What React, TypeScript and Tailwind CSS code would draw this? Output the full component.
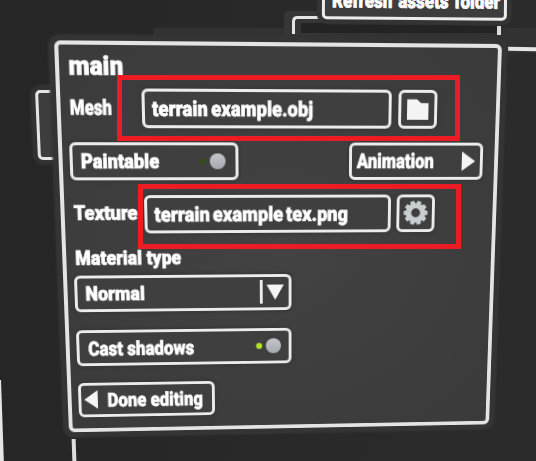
import type { ReactNode } from "react";

const boxClass =
  "box-border flex shrink-0 items-center rounded-[6px] border-[3px] border-[#ececec] bg-[#3f3f3f] shadow-[0_0_3px_2px_#393939]";

function Label({ children, className = "" }: { children: ReactNode; className?: string }) {
  return (
    <span
      className={`inline-block origin-left pt-[2px] text-[21px] leading-none font-black whitespace-nowrap text-white [-webkit-text-stroke:0.7px_white] ${className}`}
    >
      {children}
    </span>
  );
}

function Toggle({ on = false }: { on?: boolean }) {
  return (
    <div className="flex items-center gap-[4px]">
      <span
        className={`size-[6px] rounded-full ${
          on ? "bg-[#b9e42c] shadow-[0_0_2px_#87aa26]" : "bg-[#334d1d]"
        }`}
      />
      <span className="size-[16px] rounded-full bg-linear-to-b from-[#c3c6ca] to-[#a6aaae]" />
    </div>
  );
}

function FolderIcon() {
  return (
    <svg width="22" height="21" viewBox="0 0 22 21" fill="#f4f4f4">
      <path d="M0 .5h10.2l4 3.8H22V21H0z" />
    </svg>
  );
}

function GearIcon() {
  const teeth = Array.from({ length: 10 }, (_, i) => i * 36 + 18);
  return (
    <svg width="26" height="26" viewBox="-13 -13 26 26">
      <circle r="7.4" fill="none" stroke="#c9ced1" strokeWidth="5.4" />
      {teeth.map((deg) => (
        <path
          key={deg}
          d="M-2.7 -9L-2 -12.5H2L2.7 -9z"
          fill="#c9ced1"
          transform={`rotate(${deg})`}
        />
      ))}
    </svg>
  );
}

function Backdrop() {
  return (
    <>
      {/* strip of the window behind, right and above */}
      <div className="absolute top-[28px] left-[154px] h-[25px] w-[382px] bg-[#323232]" />
      <div className="absolute top-[47px] left-[508px] h-[3.5px] w-[28px] rotate-[0.6deg] bg-[#e6e6e6]" />

      {/* frame behind the refresh button */}
      <div className="absolute top-[11px] left-[284px] h-[24px] w-[40px] rounded-tl-[4px] bg-[#363636]" />
      <div className="absolute top-[23px] left-[301px] h-[10px] w-[196px] bg-[#232323]" />
      <div className="absolute top-[15.5px] left-[291.5px] h-[18px] w-[40px] rounded-tl-[5px] border-t-[3.5px] border-l-[3.5px] border-[#e4e4e4]" />
      <div className="absolute top-[26px] left-[497px] h-[9px] w-[3.5px] bg-[#dcdcdc]" />
      <div className="absolute -top-[20px] left-[322px] box-border flex h-[40px] w-[185px] rotate-[0.5deg] items-end rounded-[5px] border-[3px] border-[#ececec] bg-[#3d3d3d] pb-[5px] pl-[7px] shadow-[0_0_1px_5px_#343434]">
        <Label className="scale-x-[0.81] [word-spacing:2px]">Refresh assets folder</Label>
      </div>

      {/* left button, mostly hidden */}
      <div className="absolute top-[89.5px] left-[35px] box-border h-[70px] w-[30px] origin-top-left skew-x-[2.5deg] rounded-[5px] border-[3.5px] border-[#e6e6e6] bg-[#3d3d3d] shadow-[0_0_3px_5px_#333333]" />

      <div className="absolute top-[380px] -left-[3px] h-[81px] w-[3.5px] origin-top-left skew-x-[2deg] bg-[#e6e6e6]" />
      <div className="absolute top-[439px] left-[72px] h-[22px] w-[3.5px] skew-x-[2deg] bg-[#dedede]" />
    </>
  );
}

function MainPanel() {
  return (
    <div className="relative box-border flex h-[400px] w-[448px] origin-top-left flex-col rounded-[6px] border-[4px] border-[#e4e4e4] bg-radial from-[#434343] to-[#3a3a3a] px-[6.6px] shadow-[0_0_2px_6px_#343434] [transform:matrix3d(1.036069,0.0114203,0,0.00007185,0.0491718,1.053127,0,0.000169158,0,0,1,0,54,40.3,0,1)]">
      <div className="flex h-[42.2px] shrink-0 items-center pl-[2px]">
        <Label className="-mt-[4px] scale-x-[0.91] text-[26.5px]">main</Label>
      </div>

      <div className="flex h-[39px] shrink-0 items-center">
        <div className="w-[73.5px] shrink-0 pl-[2px]">
          <Label className="scale-x-[0.79]">Mesh</Label>
        </div>
        <div className={`${boxClass} h-[39px] w-[252px] pl-[7px]`}>
          <Label className="scale-x-[0.885] [word-spacing:-1.5px]">terrain example.obj</Label>
        </div>
        <div className={`${boxClass} ml-[7px] h-[39px] w-[40px] justify-center`}>
          <FolderIcon />
        </div>
      </div>

      <div className="mt-[13.5px] flex h-[38.4px] shrink-0">
        <div className={`${boxClass} w-[169px] justify-between pr-[10px] pl-[8.5px]`}>
          <Label className="scale-x-[0.87]">Paintable</Label>
          <Toggle />
        </div>
        <div className={`${boxClass} ml-[113px] w-[139.5px] justify-between pr-[5.5px] pl-[5.5px]`}>
          <Label className="scale-x-[0.82]">Animation</Label>
          <svg width="14" height="20" viewBox="0 0 14 20" fill="#f4f4f4">
            <path d="M0 0L14 10L0 20z" />
          </svg>
        </div>
      </div>

      <div className="mt-[15px] flex h-[38.6px] shrink-0 items-center">
        <div className="w-[73.5px] shrink-0 pl-[2px]">
          <Label className="scale-x-[0.88]">Texture</Label>
        </div>
        <div className={`${boxClass} h-full w-[252.5px] pl-[6.5px]`}>
          <Label className="scale-x-[0.895] [word-spacing:-2px]">terrain example tex.png</Label>
        </div>
        <div className={`${boxClass} ml-[6.5px] h-full w-[40px] justify-center`}>
          <GearIcon />
        </div>
      </div>

      <div className="flex h-[43px] shrink-0 items-center pt-[6px] pl-[2px]">
        <Label className="scale-x-[0.855]">Material type</Label>
      </div>

      <div className={`${boxClass} h-[38.4px] w-[223px] justify-between pr-[5px] pl-[8.5px]`}>
        <Label className="scale-x-[0.87]">Normal</Label>
        <div className="flex items-center gap-[4px]">
          <span className="h-[25px] w-[3px] bg-[#ececec]" />
          <svg width="18" height="16" viewBox="0 0 18 16" fill="#f4f4f4">
            <path d="M0 0H18L9 16z" />
          </svg>
        </div>
      </div>

      <div className={`${boxClass} mt-[19.2px] h-[38px] w-[223px] justify-between pr-[8px] pl-[9px]`}>
        <Label className="scale-x-[0.83]">Cast shadows</Label>
        <Toggle on />
      </div>

      <div className={`${boxClass} mt-[17.3px] h-[37.6px] w-[142px] gap-[10px] pl-[3.5px]`}>
        <svg width="14" height="20" viewBox="0 0 14 20" className="shrink-0" fill="#f4f4f4">
          <path d="M14 0L0 10L14 20z" />
        </svg>
        <Label className="scale-x-[0.83]">Done editing</Label>
      </div>
    </div>
  );
}

export default function App() {
  return (
    <div className="relative h-[461px] w-[536px] overflow-hidden bg-linear-to-r from-[#262626] to-[#2b2b2b] font-[Roboto,sans-serif]">
      <Backdrop />
      <MainPanel />

      {/* highlights around the two file fields */}
      <div className="absolute top-[75px] left-[117px] box-border h-[66px] w-[343px] border-[5px] border-[#ed1c24]" />
      <div className="absolute top-[184px] left-[138px] box-border h-[65px] w-[323px] border-[5px] border-[#ed1c24]" />
    </div>
  );
}
